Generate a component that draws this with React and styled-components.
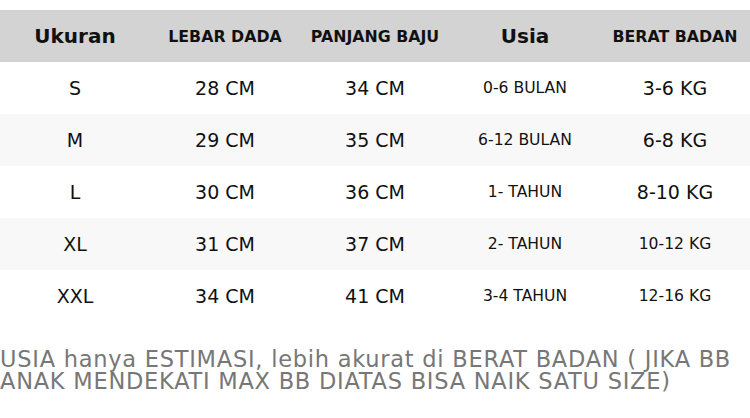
import styled, { createGlobalStyle } from "styled-components";

const GlobalStyle = createGlobalStyle`
  body {
    margin: 0;
    background: #ffffff;
    font-family: "DejaVu Sans", sans-serif;
  }
`;

const Page = styled.div`
  width: 750px;
  padding-top: 10px;
`;

const SizeTable = styled.div`
  display: grid;
  grid-template-columns: repeat(5, 150px);
  grid-auto-rows: 52px;
`;

const HeadCell = styled.div`
  display: flex;
  align-items: center;
  justify-content: center;
  background: #d3d3d3;
  color: #111111;
  font-weight: 700;
  font-size: ${(props) => (props.$big ? "20px" : "15.8px")};
`;

const Cell = styled.div`
  display: flex;
  align-items: center;
  justify-content: center;
  background: ${(props) => (props.$striped ? "#f8f8f8" : "#ffffff")};
  color: #111111;
  font-size: ${(props) => (props.$small ? "15.6px" : "19px")};
`;

const Note = styled.p`
  margin: 26px 0 0;
  color: #777777;
  font-size: 22.5px;
  line-height: 22px;
  letter-spacing: 0.75px;
`;

const headers = [
  { label: "Ukuran", big: true },
  { label: "LEBAR DADA" },
  { label: "PANJANG BAJU" },
  { label: "Usia", big: true },
  { label: "BERAT BADAN" },
];

const rows = [
  ["S", "28 CM", "34 CM", "0-6 BULAN", "3-6 KG"],
  ["M", "29 CM", "35 CM", "6-12 BULAN", "6-8 KG"],
  ["L", "30 CM", "36 CM", "1- TAHUN", "8-10 KG"],
  ["XL", "31 CM", "37 CM", "2- TAHUN", "10-12 KG"],
  ["XXL", "34 CM", "41 CM", "3-4 TAHUN", "12-16 KG"],
];

// which cells use the smaller type, by column
const smallCols = (row, col) => col === 3 || (col === 4 && row >= 3);

export default function App() {
  return (
    <Page>
      <GlobalStyle />
      <SizeTable>
        {headers.map((h) => (
          <HeadCell key={h.label} $big={h.big}>
            {h.label}
          </HeadCell>
        ))}
        {rows.map((row, r) =>
          row.map((value, c) => (
            <Cell key={`${r}-${c}`} $striped={r % 2 === 1} $small={smallCols(r, c)}>
              {value}
            </Cell>
          ))
        )}
      </SizeTable>
      <Note>
        USIA hanya ESTIMASI, lebih akurat di BERAT BADAN ( JIKA BB ANAK MENDEKATI
        MAX BB DIATAS BISA NAIK SATU SIZE)
      </Note>
    </Page>
  );
}
